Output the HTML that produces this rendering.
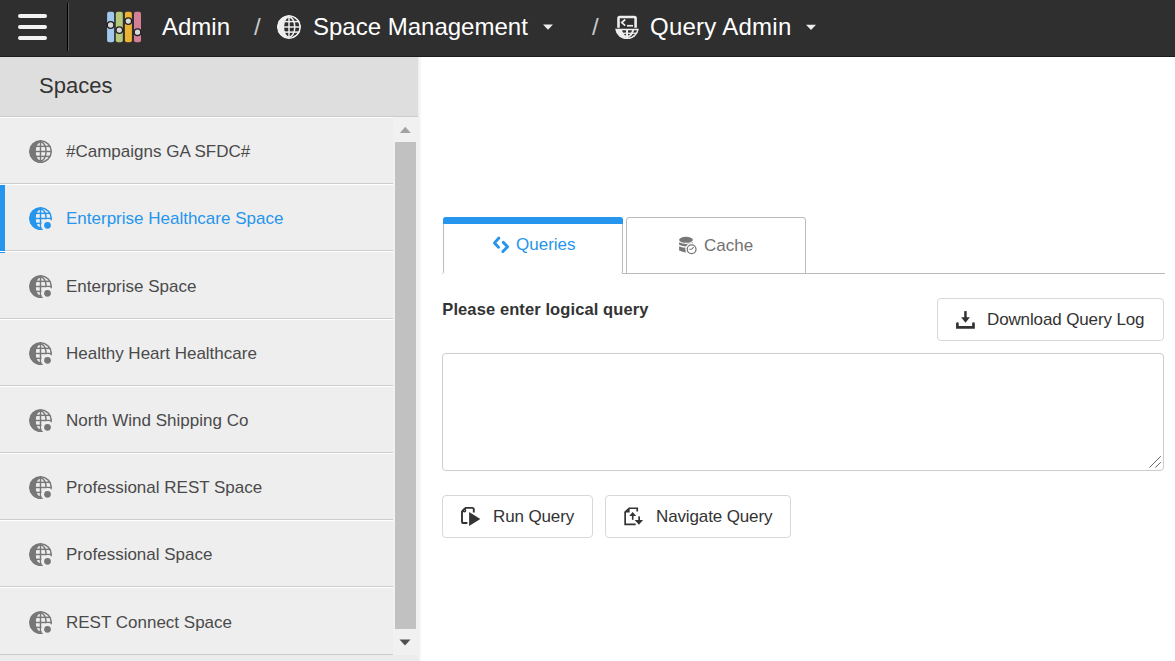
<!DOCTYPE html>
<html><head><meta charset="utf-8">
<style>
*{box-sizing:border-box;margin:0;padding:0}
html,body{width:1175px;height:661px;overflow:hidden;background:#fff;font-family:"Liberation Sans",sans-serif}
.a{position:absolute}
.t{position:absolute;white-space:nowrap;line-height:1}
#hdr{left:0;top:0;width:1175px;height:57px;background:#2f2f2f;border-bottom:1px solid #1c1c1c}
.hb{position:absolute;left:18px;width:29px;height:4px;border-radius:2px;background:#f2f2f2}
.ht{color:#fff;font-size:24px}
#side{left:0;top:57px;width:418px;height:604px;background:#ececec}
#shead{left:0;top:57px;width:418px;height:60px;background:#dedede;border-bottom:1px solid #cdcdcd}
.row{position:absolute;left:0;width:393px;background:#eee;border-top:1px solid #fff;border-bottom:1px solid #ccc}
.lt{font-size:17px;color:#4a4a4a;left:66px}
.gl{position:absolute;left:29px;width:23px;height:23px;color:#777}
.btn{border:1px solid #d8d8d8;border-radius:4px;background:#fff}
.bt{font-size:17px;color:#333;letter-spacing:-0.13px}
</style></head><body>
<svg class="a" style="width:0;height:0;left:0;top:0" aria-hidden="true">
<defs>
<clipPath id="gc"><circle cx="12" cy="12" r="12"/></clipPath>
<mask id="gm" maskUnits="userSpaceOnUse" x="0" y="0" width="24" height="24">
  <circle cx="12" cy="12" r="12" fill="#fff"/>
  <path d="M12 1.6A10.4 10.4 0 0 1 12 22.4A5 10.4 0 0 1 12 1.6Z" fill="#000"/>
  <rect x="11.25" y="0" width="1.5" height="24" fill="#fff"/>
  <rect x="0" y="5.85" width="24" height="1.5" fill="#fff"/>
  <rect x="0" y="11.25" width="24" height="1.5" fill="#fff"/>
  <rect x="0" y="16.35" width="24" height="1.5" fill="#fff"/>
  <ellipse cx="12" cy="12" rx="5.8" ry="10" fill="none" stroke="#fff" stroke-width="1.5"/>
</mask>
<mask id="gmd" maskUnits="userSpaceOnUse" x="0" y="0" width="24" height="24">
  <rect width="24" height="24" fill="#fff"/>
  <circle cx="19.3" cy="19.1" r="6.6" fill="#000"/>
</mask>
<clipPath id="bc"><path d="M0.1 13.8H23.9A12 12 0 0 1 0.1 13.8Z"/></clipPath>
<clipPath id="bi"><path d="M12 1.9A10.4 10.4 0 0 1 12 22.7A5.2 10.4 0 0 1 12 1.9Z"/></clipPath>
<mask id="bm" maskUnits="userSpaceOnUse" x="0" y="0" width="24" height="24">
  <rect width="24" height="24" fill="#fff"/>
  <g clip-path="url(#bi)"><rect x="0" y="15.3" width="24" height="9" fill="#000"/></g>
  <rect x="0" y="17.6" width="24" height="1.3" fill="#fff"/>
  <rect x="11" y="0" width="2" height="24" fill="#fff"/>
  <ellipse cx="12" cy="11.5" rx="6.5" ry="10.3" fill="none" stroke="#fff" stroke-width="2"/>
</mask>
<symbol id="globe" viewBox="0 0 24 24"><g clip-path="url(#gc)"><rect width="24" height="24" fill="currentColor" mask="url(#gm)"/></g></symbol>
<symbol id="globed" viewBox="0 0 24 24"><g mask="url(#gmd)"><g clip-path="url(#gc)"><rect width="24" height="24" fill="currentColor" mask="url(#gm)"/></g></g><circle cx="19.3" cy="19.1" r="3.5" fill="currentColor"/></symbol>
<symbol id="bowl" viewBox="0 0 24 24"><g clip-path="url(#bc)"><rect width="24" height="24" fill="currentColor" mask="url(#bm)"/></g></symbol>
</defs>
</svg>

<!-- HEADER -->
<div id="hdr" class="a">
  <div class="hb" style="top:14px"></div>
  <div class="hb" style="top:25px"></div>
  <div class="hb" style="top:36px"></div>
  <div class="a" style="left:67px;top:3px;width:1px;height:48px;background:#000"></div><div class="a" style="left:68px;top:3px;width:1px;height:48px;background:#555"></div>
  <svg class="a" style="left:100px;top:5px" width="48" height="44" viewBox="100 5 48 44">
    <rect x="107.1" y="11.7" width="7" height="30.5" rx="2" fill="#a1c9ed"/>
    <rect x="115.8" y="11.7" width="7" height="30.5" rx="2" fill="#b5c97a"/>
    <rect x="124.9" y="11.7" width="7" height="30.5" rx="2" fill="#ecb333"/>
    <rect x="134" y="11.7" width="7" height="30.5" rx="2" fill="#d47f96"/>
    <g fill="#d8d8d8" stroke="#1e1e1e" stroke-width="1.3">
      <circle cx="110.6" cy="25" r="3.3"/>
      <circle cx="119.3" cy="30.1" r="3.3"/>
      <circle cx="128.3" cy="21.1" r="3.3"/>
      <circle cx="137.5" cy="32.2" r="3.3"/>
    </g>
  </svg>
  <div class="t ht" style="left:162px;top:14.5px">Admin</div>
  <div class="t ht" style="left:254px;top:14.8px;color:#c8c8c8">/</div>
  <svg class="a" style="left:277px;top:15px;color:#eee" width="24" height="24"><use href="#globe"/></svg>
  <div class="t ht" style="left:313px;top:14.5px">Space Management</div>
  <svg class="a" style="left:543px;top:24px" width="10" height="6"><path d="M0 0.5H10L5 5.8Z" fill="#eee"/></svg>
  <div class="t ht" style="left:592px;top:14.8px;color:#c8c8c8">/</div>
  <svg class="a" style="left:615px;top:15px" width="24" height="24" viewBox="0 0 24 24">
    <path d="M3.5 12.7V3.2A1.2 1.2 0 0 1 4.7 2H19.4A1.2 1.2 0 0 1 20.6 3.2V12.7" fill="none" stroke="#eee" stroke-width="2.6"/>
    <path d="M10.2 4.5L6.8 7.6L10.2 10.7" fill="none" stroke="#eee" stroke-width="1.7"/>
    <rect x="12" y="9.9" width="6" height="1.7" fill="#eee"/>
    <svg x="0" y="0" width="24" height="24" style="color:#eee"><use href="#bowl"/></svg>
  </svg>
  <div class="t ht" style="left:650px;top:14.5px;letter-spacing:0.25px">Query Admin</div>
  <svg class="a" style="left:806px;top:24px" width="10" height="7"><path d="M0 0.7H10L5 6Z" fill="#eee"/></svg>
</div>

<!-- SIDEBAR -->
<div id="side" class="a"></div>
<div id="shead" class="a"></div>
<div class="t" style="left:39px;top:75px;font-size:22px;color:#333">Spaces</div>

<div class="row" style="top:117px;height:67px"><svg class="gl" style="top:22px"><use href="#globe"/></svg><div class="t lt" style="top:25.4px">#Campaigns GA SFDC#</div></div>
<div class="row" style="top:184px;height:67px"><svg class="gl" style="top:22px;color:#2695ed"><use href="#globed"/></svg><div class="t lt" style="top:25.4px;color:#2695ed">Enterprise Healthcare Space</div></div>
<div class="a" style="left:0;top:185px;width:5px;height:66px;background:#2695ed;z-index:2"></div>
<div class="a" style="left:0;top:252px;width:5px;height:1px;background:#2695ed;z-index:2"></div>
<div class="row" style="top:251px;height:68px"><svg class="gl" style="top:22.6px"><use href="#globed"/></svg><div class="t lt" style="top:26.4px">Enterprise Space</div></div>
<div class="row" style="top:319px;height:67px"><svg class="gl" style="top:22px"><use href="#globed"/></svg><div class="t lt" style="top:25.4px">Healthy Heart Healthcare</div></div>
<div class="row" style="top:386px;height:67px"><svg class="gl" style="top:22px"><use href="#globed"/></svg><div class="t lt" style="top:25.4px">North Wind Shipping Co</div></div>
<div class="row" style="top:453px;height:67px"><svg class="gl" style="top:22px"><use href="#globed"/></svg><div class="t lt" style="top:25.4px">Professional REST Space</div></div>
<div class="row" style="top:520px;height:67px"><svg class="gl" style="top:22px"><use href="#globed"/></svg><div class="t lt" style="top:25.4px">Professional Space</div></div>
<div class="row" style="top:587px;height:68px"><svg class="gl" style="top:22.5px"><use href="#globed"/></svg><div class="t lt" style="top:26.4px">REST Connect Space</div></div>

<!-- scrollbar -->
<div class="a" style="left:393px;top:117px;width:25px;height:538px;background:#f1f1f1"></div>
<svg class="a" style="left:399px;top:126px" width="13" height="8"><path d="M0.8 7H11.8L6.3 0.8Z" fill="#a3a3a3"/></svg>
<div class="a" style="left:395px;top:142px;width:21px;height:487px;background:#c1c1c1"></div>
<svg class="a" style="left:399.3px;top:638.7px" width="13" height="8"><path d="M0.5 0.5H11.5L6 6.5Z" fill="#505050"/></svg>
<div class="a" style="left:418px;top:57px;width:4px;height:604px;background:linear-gradient(to right,rgba(0,0,0,.07),rgba(0,0,0,0))"></div>

<!-- MAIN -->
<div class="a" style="left:443px;top:217px;width:180px;height:57px;border:1px solid #bbb;border-top:0;border-bottom-color:#fff;border-radius:3px 3px 3px 3px;background:#fff"></div>
<div class="a" style="left:443px;top:217px;width:180px;height:7px;background:#2695ed;border-radius:3px 3px 0 0"></div>
<div class="a" style="left:626px;top:217px;width:180px;height:57px;border:1px solid #bbb;border-radius:3px 3px 0 0;background:#fff"></div>
<div class="a" style="left:622px;top:273px;width:543px;height:1px;background:#bbb"></div><div class="a" style="left:442px;top:273px;width:1px;height:1px;background:#ccc"></div>
<svg class="a" style="left:488px;top:232px" width="26" height="24" viewBox="0 0 26 24"><path d="M10.9 6L6.5 10.9L10.5 15.3M15.3 10.4L19.6 14.7L14.9 19.6" fill="none" stroke="#2695ed" stroke-width="2.9" stroke-linecap="round" stroke-linejoin="round"/></svg>
<div class="t" style="left:516px;top:235.5px;font-size:17px;color:#2695ed">Queries</div>
<svg class="a" style="left:674px;top:232px" width="26" height="24" viewBox="0 0 26 24">
  <defs><mask id="cm" maskUnits="userSpaceOnUse" x="0" y="0" width="26" height="24"><rect width="26" height="24" fill="#fff"/><circle cx="17.6" cy="17.3" r="6.3" fill="#000"/></mask></defs>
  <g fill="#777" mask="url(#cm)">
    <ellipse cx="12" cy="7.8" rx="6.9" ry="3"/>
    <path d="M5.1 10.3V12.7Q12 16.3 18.9 12.7V10.3Q12 13.6 5.1 10.3Z"/>
    <path d="M5.1 14.2V18.6Q12 22.2 18.9 18.6V14.2Q12 17.4 5.1 14.2Z"/>
  </g>
  <circle cx="17.6" cy="17.3" r="4.4" fill="none" stroke="#777" stroke-width="1.3"/>
  <path d="M15.3 17.3H17.6L19.7 15.2" fill="none" stroke="#777" stroke-width="1.1"/>
</svg>
<div class="t" style="left:704px;top:236.5px;font-size:17px;color:#727272">Cache</div>

<div class="t" style="left:442.3px;top:301px;font-size:16.5px;font-weight:bold;color:#333;letter-spacing:0.1px">Please enter logical query</div>

<div class="a btn" style="left:937px;top:298px;width:227px;height:43px"></div>
<svg class="a" style="left:950px;top:306px" width="30" height="28" viewBox="0 0 30 28">
  <path d="M7.4 17.5V21.4H23.5V17.5" fill="none" stroke="#333" stroke-width="2.7" stroke-linecap="round"/>
  <rect x="14.2" y="5.1" width="2.5" height="7" fill="#333"/>
  <path d="M11.1 11.3H19.9L15.5 16.7Z" fill="#333"/>
</svg>
<div class="t bt" style="left:987px;top:310.6px">Download Query Log</div>

<div class="a" style="left:442px;top:353px;width:722px;height:118px;border:1px solid #ccc;border-radius:4px;background:#fff"></div>
<svg class="a" style="left:1146px;top:453px" width="18" height="18" viewBox="1146 453 18 18"><path d="M1149.4 467.6L1160.8 456.2M1155.3 467.6L1160.8 462.1" stroke="#666" stroke-width="1"/></svg>

<div class="a btn" style="left:442px;top:495px;width:151px;height:43px"></div>
<svg class="a" style="left:456px;top:502px" width="30" height="28" viewBox="0 0 30 28">
  <path d="M11.4 21H7.6Q6 21 6 19.4V9.5L9.6 5.9H16.2Q17.8 5.9 17.8 7.5V10.6" fill="none" stroke="#333" stroke-width="1.9" stroke-linejoin="round"/>
  <circle cx="8.4" cy="8.5" r="1.2" fill="none" stroke="#333" stroke-width="1.4"/>
  <path d="M13.1 10.1L24.3 17.1L13.1 24Z" fill="#333"/>
</svg>
<div class="t bt" style="left:493px;top:507.5px">Run Query</div>

<div class="a btn" style="left:605px;top:495px;width:186px;height:43px"></div>
<svg class="a" style="left:619px;top:502px" width="30" height="28" viewBox="0 0 30 28">
  <path d="M16.7 22.35H6.15V10.2L10.2 6.25H18.25V9.5" fill="none" stroke="#333" stroke-width="1.7"/>
  <path d="M5.3 10.6L10.6 5.4V10.6Z" fill="#333"/>
  <rect x="12.9" y="13" width="1.6" height="4.8" fill="#333"/>
  <path d="M10.2 14H17.2L13.7 10Z" fill="#333"/>
  <rect x="19.3" y="14.4" width="1.7" height="4.5" fill="#333"/>
  <path d="M15.7 18H24.1L19.9 22.8Z" fill="#333"/>
</svg>
<div class="t bt" style="left:656px;top:507.5px">Navigate Query</div>
</body></html>
